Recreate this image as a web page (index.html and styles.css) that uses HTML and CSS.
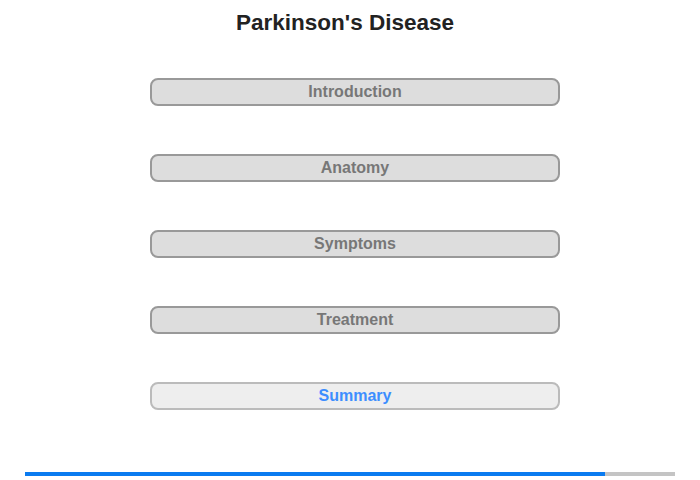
FILE: index.html
```html
<!DOCTYPE html>
<html lang="en">
<head>
    <meta charset="UTF-8">
    <meta name="viewport" content="width=device-width, initial-scale=1.0">
    <title>Parkinson's Disease</title>
    <link rel="stylesheet" href="styles.css">
</head>
<body>
    <div class="page">
        <h1 class="title">Parkinson's Disease</h1>
        <ul class="menu">
            <li class="menu-item">Introduction</li>
            <li class="menu-item">Anatomy</li>
            <li class="menu-item">Symptoms</li>
            <li class="menu-item">Treatment</li>
            <li class="menu-item current">Summary</li>
        </ul>
        <!-- 진행 표시줄 -->
        <div class="progress">
            <div class="progress-fill" style="width: 580px"></div>
        </div>
    </div>
</body>
</html>
```

FILE: styles.css
```css
body{
    margin: 0;
    background: white;
    font-family: "Liberation Sans", Arial, sans-serif;
}
.page{
    width: 700px;
    height: 480px;
    display: flex;
    flex-direction: column;
}
.title{
    margin: 0;
    padding: 10px 10px 0 0;
    font-size: 22.5px;
    line-height: 26px;
    font-weight: bold;
    color: #222;
    text-align: center;
}
.menu{
    list-style-type: none;
    margin: 42px 0 0 150px;
    padding: 0;
    width: 410px;
    display: flex;
    flex-direction: column;
    gap: 48px;
}
.menu-item{
    box-sizing: border-box;
    height: 28px;
    padding-bottom: 1px;
    border: 2px solid #999;
    border-radius: 8px;
    background: #ddd;
    color: #777;
    font-size: 16px;
    font-weight: bold;
    line-height: 23px;
    text-align: center;
    cursor: pointer;
}
.menu-item.current{
    background: #eee;
    border-color: #bbb;
    color: #3d8eff;
}
.progress{
    margin: 62px 0 0 25px;
    width: 650px;
    height: 4px;
    background: #c4c4c4;
}
.progress-fill{
    height: 100%;
    background: #0a7bf0;
}
```
